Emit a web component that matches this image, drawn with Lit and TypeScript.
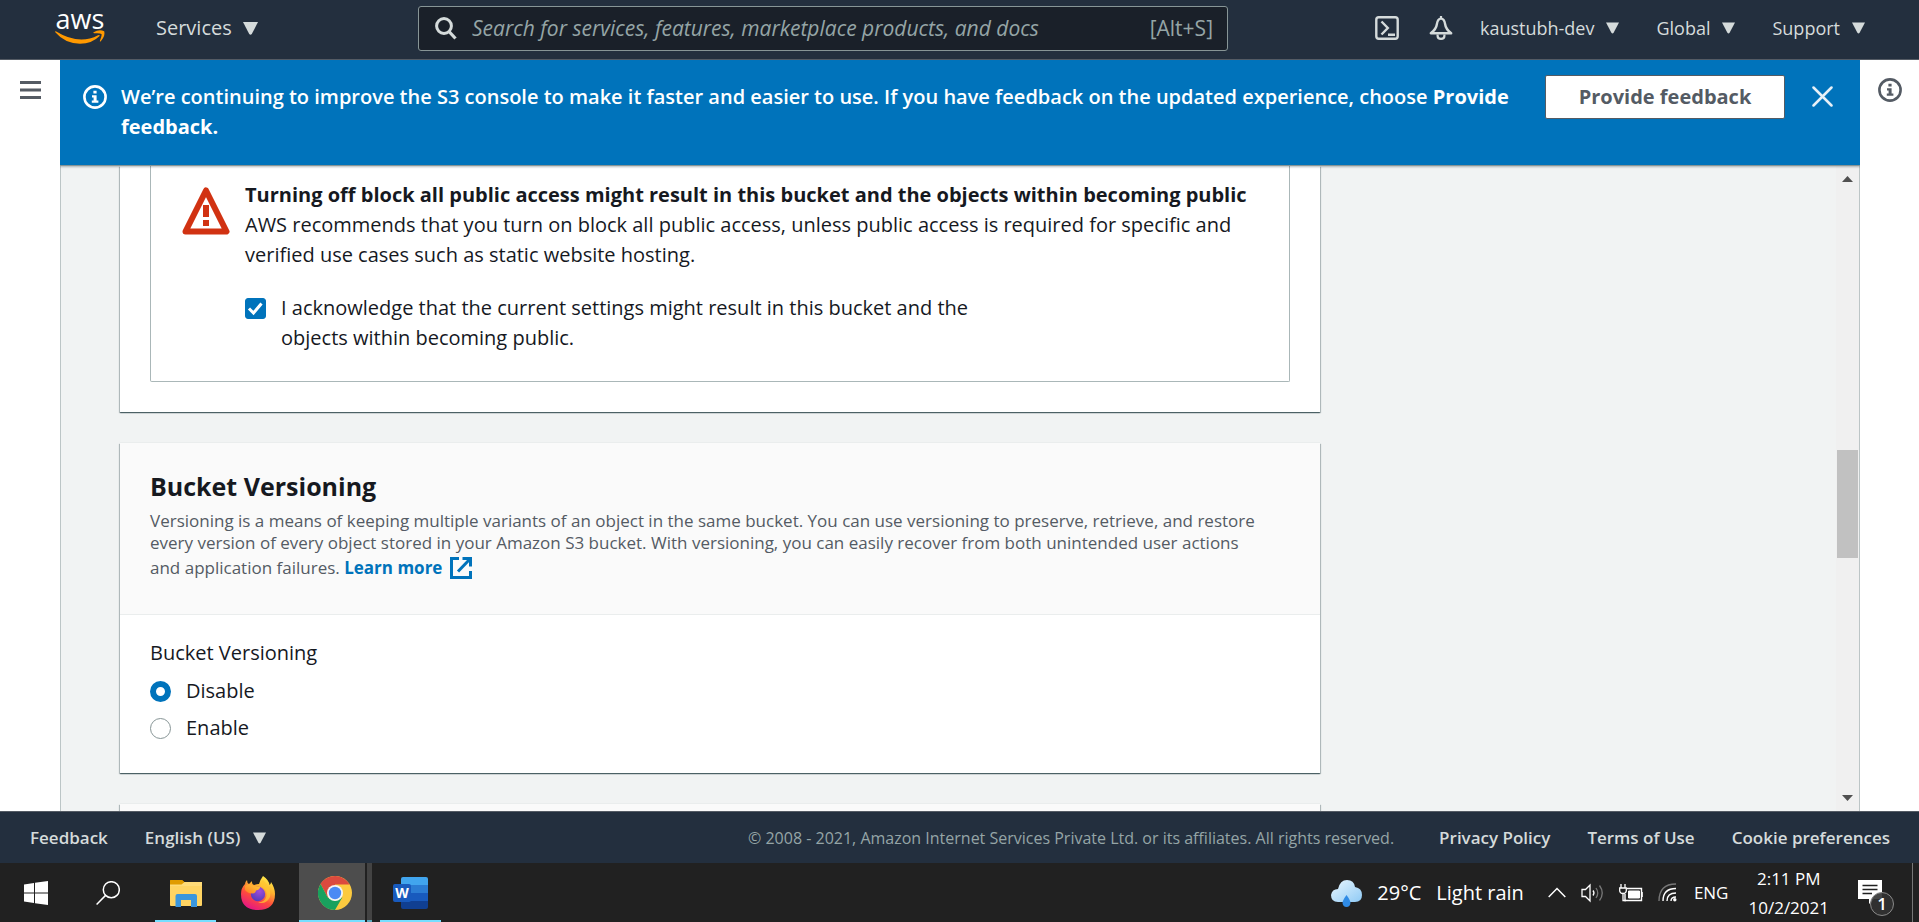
import { LitElement, html, css, svg } from "lit";
import { customElement, state } from "lit/decorators.js";

const caret = html`<svg class="caret" viewBox="0 0 14 12" aria-hidden="true"><path d="M0 0H14L8.2 11.2Q7 12.6 5.8 11.2Z" fill="currentColor"/></svg>`;

const infoIcon = html`<svg class="info" viewBox="0 0 24 24" aria-hidden="true">
  <circle cx="12" cy="12" r="10.6" fill="none" stroke="currentColor" stroke-width="2.6"/>
  <path d="M10.4 5.8h3.2v2.8h-3.2zM9 10.2h4.6v5.4h1.8v2.2H8.8v-2.2h1.8v-3.2H9z" fill="currentColor"/>
</svg>`;

@customElement("console-header")
class ConsoleHeader extends LitElement {
  static styles = css`
    :host { display: block; }
    .bar {
      display: grid;
      grid-template-columns: 418px minmax(200px, 810px) 1fr;
      align-items: center;
      height: 60px;
      box-sizing: border-box;
      padding-bottom: 3px;
      border-bottom: 1px solid #545b64;
      background: #232f3e;
      color: #d5dbdb;
    }
    .left { display: flex; align-items: center; padding-left: 55px; gap: 51px; }
    .logo { display: flex; flex-direction: column; align-items: center; gap: 4px; width: 50px; color: #fff; text-decoration: none; }
    .logo-word { font-size: 27px; line-height: 14px; }
    .smile { width: 50px; height: 14px; display: block; }
    button { all: unset; display: flex; align-items: center; gap: 12px; font-size: 18px; line-height: 24px; white-space: nowrap; cursor: pointer; }
    .services { font-size: 20px; gap: 11px; }
    .caret { width: 13px; height: 12px; flex: none; }
    .services .caret { width: 15px; height: 13px; }
    .search {
      display: flex;
      align-items: center;
      gap: 15px;
      height: 45px;
      box-sizing: border-box;
      padding: 0 14px 0 16px;
      border: 1px solid #879596;
      border-radius: 3px;
      background: #1a2029;
      color: #95a5a6;
      font-size: 21px;
      line-height: 30px;
    }
    .search input { all: unset; flex: 1; min-width: 0; font-size: 21px; }
    .search input::placeholder { color: #95a5a6; font-style: italic; opacity: 1; }
    .glass { width: 22px; height: 26px; color: #d5dbdb; }
    .right { display: flex; justify-content: flex-end; align-items: center; padding-right: 54px; gap: 37px; }
    .tools { display: flex; gap: 30px; }
    .account { display: flex; align-items: center; gap: 27px; }
    .tool { width: 24px; height: 24px; display: block; }
  `;

  render() {
    return html`<header class="bar">
      <div class="left">
        <a class="logo" href="#" aria-label="aws home">
          <span class="logo-word">aws</span>
          <svg class="smile" viewBox="0 0 50 14" aria-hidden="true">
            <path d="M0.8 1.2Q24 15.500 43 5.200Q45 4.300 44.600 5.900Q37 13.600 25 13.700Q10 13.700 0.300 2.300Q-0.200 1 0.800 1.200Z" fill="#ff9900"/>
            <path d="M38.600 2.300Q44 -1 49.200 1.200Q50.500 6 45.600 11.400Q44.500 12 45 10.600Q47.300 5 46.400 3.900Q45.200 2.900 39.100 3.300Q37.900 3.100 38.600 2.300Z" fill="#ff9900"/>
          </svg>
        </a>
        <button class="services" aria-haspopup="true">Services ${caret}</button>
      </div>
      <label class="search">
        <svg class="glass" viewBox="0 0 22 26" aria-hidden="true"><circle cx="9" cy="11" r="7.400" fill="none" stroke="currentColor" stroke-width="3"/><path d="M14 16.500L20.500 23.500" stroke="currentColor" stroke-width="3.200"/></svg>
        <input type="search" aria-label="Search" placeholder="Search for services, features, marketplace products, and docs">
        <span>[Alt+S]</span>
      </label>
      <div class="right">
        <div class="account">
          <div class="tools">
            <button aria-label="CloudShell"><svg class="tool" viewBox="0 0 24 24"><rect x="1.300" y="1.300" width="21.400" height="21.400" rx="2.500" fill="none" stroke="currentColor" stroke-width="2.400"/><path d="M6.500 5.500L12.800 12L6.500 18.500M13 18.700H20" fill="none" stroke="currentColor" stroke-width="2.400"/></svg></button>
            <button aria-label="Notifications"><svg class="tool" viewBox="0 0 24 24"><path d="M12 2.600C9 2.600 8.200 5.500 7.800 8.500C7.400 12 5 14.800 1.800 17.300H22.200C19 14.800 16.600 12 16.200 8.500C15.800 5.500 15 2.600 12 2.600Z" fill="none" stroke="currentColor" stroke-width="2.400" stroke-linejoin="round"/><path d="M12 0V3M8.600 18.500V20Q8.600 22.800 12 22.800Q15.400 22.800 15.400 20V18.500" fill="none" stroke="currentColor" stroke-width="2.200"/></svg></button>
          </div>
          <button aria-haspopup="true">kaustubh-dev ${caret}</button>
        </div>
        <button aria-haspopup="true">Global ${caret}</button>
        <button aria-haspopup="true">Support ${caret}</button>
      </div>
    </header>`;
  }
}

@customElement("feedback-banner")
class FeedbackBanner extends LitElement {
  static styles = css`
    :host { display: block; }
    .banner {
      display: flex;
      align-items: flex-start;
      height: 106px;
      box-sizing: border-box;
      padding: 15px 27px 0 23px;
      border-bottom: 1px solid #879596;
      background: #0073bb;
      color: #fff;
      box-shadow: 0 1px 2px rgba(0, 28, 36, 0.3);
    }
    .info { width: 24px; height: 24px; margin: 10px 14px 0 0; flex: none; }
    .message { flex: 1; margin: 7px 20px 0 0; font-size: 20px; line-height: 30px; font-weight: 600; }
    .message b { font-weight: 700; }
    button { font: inherit; cursor: pointer; }
    .action { width: 240px; height: 44px; flex: none; border: 1px solid #545b64; border-radius: 2px; background: #fff; color: #545b64; font-size: 20px; font-weight: 700; padding: 0 0 2px; }
    .close { display: flex; border: 0; background: none; color: #e6f0f7; padding: 11px 0 0; margin-left: 27px; }
    .close svg { width: 21px; height: 21px; display: block; }
  `;

  render() {
    return html`<div class="banner" role="status">
      ${infoIcon}
      <p class="message">We’re continuing to improve the S3 console to make it faster and easier to use. If you have feedback on the updated experience, choose <b>Provide feedback.</b></p>
      <button class="action">Provide feedback</button>
      <button class="close" aria-label="Dismiss"><svg viewBox="0 0 21 21"><path d="M1.500 1.500L19.500 19.500M19.500 1.500L1.500 19.500" stroke="currentColor" stroke-width="2.500" stroke-linecap="round"/></svg></button>
    </div>`;
  }
}

@customElement("bucket-form")
class BucketForm extends LitElement {
  @state() private versioning = "Disable";

  static styles = css`
    :host { display: block; }
    .page { display: flex; flex-direction: column; gap: 31px; max-width: 1200px; margin-left: 59px; color: #16191f; font-size: 20px; line-height: 30px; }
    .card { background: #fff; box-shadow: 0 1px 1px rgba(0, 28, 36, 0.5), 1px 1px 1px rgba(0, 28, 36, 0.2), -1px 1px 1px rgba(0, 28, 36, 0.2), 0 -1px 0 #eaeded; }
    .inset { padding: 0 30px 30px; }
    .alert { display: flex; gap: 15px; padding: 14px 31px 28px; border: 1px solid #aab7b8; border-top: 0; border-radius: 0 0 2px 2px; }
    .warning { width: 48px; height: 48px; margin-top: 7px; flex: none; }
    .alert p { margin: 0; }
    .ack { display: flex; align-items: flex-start; gap: 15px; max-width: 760px; margin-top: 23px; }
    .ack input { appearance: none; flex: none; box-sizing: border-box; width: 21px; height: 21px; margin: 5px 0 0; border: 1px solid #aab7b8; border-radius: 3px; background: #fff; }
    .ack input:checked {
      border-color: #0073bb;
      background: #0073bb url("data:image/svg+xml,%3Csvg xmlns='http://www.w3.org/2000/svg' viewBox='0 0 19 19'%3E%3Cpath d='M3 9.500L7.500 14L15.500 4.500' fill='none' stroke='white' stroke-width='3'/%3E%3C/svg%3E") center / 19px 19px no-repeat;
    }
    .head { padding: 26px 30px 32px; background: #fafafa; border-bottom: 1px solid #eaeded; }
    .next { height: 60px; background: #fafafa; }
    h2 { margin: 0; font-size: 25px; line-height: 34px; font-weight: 700; }
    .desc { margin: 7px 24px 0 0; color: #545b64; font-size: 17px; line-height: 22px; }
    .desc a { color: #0073bb; font-weight: 700; line-height: 28px; text-decoration: none; white-space: nowrap; }
    .external { width: 22px; height: 22px; margin-left: 8px; vertical-align: -5px; }
    fieldset { border: 0; margin: 0; padding: 23px 30px 30px; }
    legend { float: left; width: 100%; padding: 0; margin-bottom: 8px; }
    .options { clear: both; display: flex; flex-direction: column; gap: 7px; }
    .option { display: flex; align-items: center; gap: 15px; }
    .option input { appearance: none; width: 21px; height: 21px; margin: 0; box-sizing: border-box; border: 1px solid #879596; border-radius: 50%; background: #fff; }
    .option input:checked { border: 6px solid #0073bb; }
  `;

  render() {
    return html`<main class="page">
      <section class="card inset">
        <div class="alert">
          <svg class="warning" viewBox="0 0 48 48" aria-hidden="true"><path d="M24 3.500L44.500 44.500H3.500Z" fill="none" stroke="#d13212" stroke-width="6" stroke-linejoin="round"/><path d="M21 18h6v12h-6zM21 33h6v6h-6z" fill="#d13212"/></svg>
          <div>
            <p><strong>Turning off block all public access might result in this bucket and the objects within becoming public</strong></p>
            <p>AWS recommends that you turn on block all public access, unless public access is required for specific and verified use cases such as static website hosting.</p>
            <label class="ack"><input type="checkbox" checked><span>I acknowledge that the current settings might result in this bucket and the objects within becoming public.</span></label>
          </div>
        </div>
      </section>
      <section class="card">
        <div class="head">
          <h2>Bucket Versioning</h2>
          <p class="desc">Versioning is a means of keeping multiple variants of an object in the same bucket. You can use versioning to preserve, retrieve, and restore every version of every object stored in your Amazon S3 bucket. With versioning, you can easily recover from both unintended user actions and application failures. <a href="#">Learn more<svg class="external" viewBox="0 0 22 22" aria-hidden="true"><path d="M9 1.500H1.500V20.500H20.500V14M12.500 1.500H20.500V9.500M20 2L8 14.500" fill="none" stroke="currentColor" stroke-width="3"/></svg></a></p>
        </div>
        <fieldset>
          <legend>Bucket Versioning</legend>
          <div class="options">
            ${["Disable", "Enable"].map((name) => html`<label class="option"><input type="radio" name="versioning" .checked=${this.versioning === name} @change=${() => (this.versioning = name)}><span>${name}</span></label>`)}
          </div>
        </fieldset>
      </section>
      <section class="card next"></section>
    </main>`;
  }
}

@customElement("console-footer")
class ConsoleFooter extends LitElement {
  static styles = css`
    :host { display: block; }
    footer { display: flex; align-items: center; justify-content: space-between; height: 52px; box-sizing: border-box; padding: 0 29px 0 30px; border-top: 1px solid #545b64; background: #232f3e; color: #d5dbdb; font-size: 17px; font-weight: 600; white-space: nowrap; }
    div { display: flex; align-items: center; gap: 37px; }
    a { color: inherit; text-decoration: none; }
    .language { display: flex; align-items: center; gap: 12px; }
    select { all: unset; font-size: 17px; cursor: pointer; }
    .caret { width: 13px; height: 12px; }
    .copyright { color: #95a5a6; margin-right: 8px; font-size: 16px; font-weight: 400; }
  `;

  render() {
    return html`<footer>
      <div>
        <a href="#">Feedback</a>
        <label class="language"><select aria-label="Language"><option>English (US)</option></select>${caret}</label>
      </div>
      <div>
        <span class="copyright">© 2008 - 2021, Amazon Internet Services Private Ltd. or its affiliates. All rights reserved.</span>
        <a href="#">Privacy Policy</a>
        <a href="#">Terms of Use</a>
        <a href="#">Cookie preferences</a>
      </div>
    </footer>`;
  }
}

const folderArt = svg`
  <path d="M1 3Q1 2 2 2H13L16 5V10H1Z" fill="#e09b00"/>
  <path d="M1 6H33V27Q33 28 32 28H2Q1 28 1 27Z" fill="#ffd463"/>
  <path d="M1 6H12L15 4H33V8H1Z" fill="#ffdb78"/>
  <path d="M1 3Q1 2 2 2H13L15.500 4L12.500 6.500H1Z" fill="#e09b00"/>
  <path d="M6.500 29V18Q6.500 16 8.500 16H26Q28 16 28 18V29H22V22H12V29Z" fill="#3a96dd"/>`;

const firefoxArt = svg`
  <defs>
    <linearGradient id="ff1" x1="0.800" y1="0" x2="0.300" y2="1"><stop offset="0" stop-color="#fff44f"/><stop offset=".35" stop-color="#ffb22e"/><stop offset=".65" stop-color="#ff4a3d"/><stop offset="1" stop-color="#e31587"/></linearGradient>
    <radialGradient id="ff2" cx=".6" cy=".3" r=".8"><stop offset="0" stop-color="#a44bd8"/><stop offset="1" stop-color="#4a3bb8"/></radialGradient>
    <linearGradient id="ff3" x1="1" y1="0" x2="0" y2="1"><stop offset="0" stop-color="#ffd23c"/><stop offset="1" stop-color="#ff7a22"/></linearGradient>
  </defs>
  <path d="M22 0Q28 4 28.500 9Q30 8 30 6Q34 12 34 18Q34 34 17 34Q0 34 0 18Q0 12 4 8Q4 6 6 4Q6 7 8 8Q9 7 11 5Q10.500 8 13 9Q16 8 18 8Q19 4 22 0Z" fill="url(#ff1)"/>
  <circle cx="17" cy="18" r="7.200" fill="url(#ff2)"/>
  <path d="M4 10Q8 7 12 9.500Q14 11 19 11Q19 13.500 15 14.500Q15 17 11.500 17.500Q7 17.500 4 14Z" fill="url(#ff3)"/>
  <path d="M20 10Q26 13 25.500 20Q24 26 17 26.500Q25 29 29 21Q31 12 22 4Q18 7 20 10Z" fill="#ffc532" opacity=".75"/>`;

const chromeArt = svg`
  <circle cx="17" cy="17" r="17" fill="#fcca3f"/>
  <path d="M17 17L17 8.500H31.700A17 17 0 0 0 2.600 8L9.600 21.200Z" fill="#db4a3e"/>
  <path d="M2.600 8A17 17 0 0 0 17 34L24.400 21.200L17 25L9.600 21.200Z" fill="#19a15e"/>
  <circle cx="17" cy="17" r="8" fill="#f4f4f4"/>
  <circle cx="17" cy="17" r="6.200" fill="#4a8af4"/>`;

const wordArt = svg`
  <path d="M8 2Q8 0 10 0H33Q35 0 35 2V8H8Z" fill="#41a5ee"/>
  <path d="M8 8H35V16H8Z" fill="#2b7cd3"/>
  <path d="M8 16H35V24H8Z" fill="#185abd"/>
  <path d="M8 24H35V30Q35 32 33 32H10Q8 32 8 30Z" fill="#103f91"/>
  <rect x="0" y="7" width="18" height="18" rx="2" fill="#185abd"/>
  <text x="9" y="21" text-anchor="middle" font-size="14" font-weight="700" fill="#fff">W</text>`;

@customElement("task-bar")
class TaskBar extends LitElement {
  static styles = css`
    :host { display: block; }
    .bar { display: flex; justify-content: space-between; height: 59px; background: #212121; color: #fff; white-space: nowrap; }
    .apps { display: flex; align-items: stretch; }
    button { all: unset; box-sizing: border-box; display: flex; align-items: center; justify-content: center; }
    svg { display: block; flex: none; }
    .start, .find { width: 72px; }
    .app { width: 61px; margin-left: 11px; border-bottom: 2px solid transparent; border-top: 2px solid transparent; }
    .running { border-bottom-color: #76deff; }
    .stack { display: flex; margin-left: 11px; }
    .active { width: 66px; margin: 0; background: #4d4d4d; border-top: 0; padding: 2px 0 0 6px; border-bottom-color: #76deff; }
    .behind { width: 5px; margin-left: 2px; background: #434343; border-bottom: 2px solid #5fa9be; }
    .after { margin-left: 8px; }
    .tray { display: flex; align-items: center; }
    .weather { gap: 15px; font-size: 20px; }
    .status { display: flex; align-items: center; gap: 15px; margin-left: 24px; }
    .lang { margin-left: 17px; font-size: 17px; }
    .clock { display: flex; flex-direction: column; align-items: center; gap: 6px; margin: 0 29px 0 20px; font-size: 17px; line-height: 23px; }
    .note { position: relative; width: 36px; height: 36px; margin: 10px 18px 0 0; }
    .badge { position: absolute; right: 0; bottom: 0; width: 24px; height: 24px; box-sizing: border-box; border: 1px solid #8a8a8a; border-radius: 50%; background: rgba(50, 50, 50, 0.900); font-size: 17px; line-height: 22px; font-weight: 600; text-align: center; }
    .peek { align-self: stretch; width: 6px; border-left: 1px solid #777; }
  `;

  render() {
    return html`<nav class="bar" aria-label="Taskbar">
      <div class="apps">
        <button class="start" aria-label="Start"><svg width="24" height="24" viewBox="0 0 24 24"><path d="M0 3.500L10 2V11.500H0ZM11 1.800L24 0V11.500H11ZM0 12.500H10V22L0 20.500ZM11 12.500H24V24L11 22.200Z" fill="#fff"/></svg></button>
        <button class="find" aria-label="Search"><svg width="24" height="24" viewBox="0 0 24 24"><circle cx="15.300" cy="8.700" r="8" fill="none" stroke="#fff" stroke-width="1.500"/><path d="M9.600 14.400L0.600 23.500" stroke="#fff" stroke-width="1.500"/></svg></button>
        <button class="app running" aria-label="File Explorer"><svg width="34" height="30" viewBox="0 0 34 30">${folderArt}</svg></button>
        <button class="app" aria-label="Firefox"><svg width="34" height="34" viewBox="0 0 34 34">${firefoxArt}</svg></button>
        <div class="stack">
          <button class="app active" aria-label="Chrome"><svg width="34" height="34" viewBox="0 0 34 34">${chromeArt}</svg></button>
          <span class="behind"></span>
        </div>
        <button class="app running after" aria-label="Word"><svg width="35" height="32" viewBox="0 0 35 32">${wordArt}</svg></button>
      </div>
      <div class="tray">
        <button class="weather"><svg width="31" height="28" viewBox="0 0 31 28"><defs><linearGradient id="cloud" x1="0" y1="0" x2="1" y2="1"><stop offset="0" stop-color="#eaf7ff"/><stop offset="1" stop-color="#8fcaf5"/></linearGradient></defs><path d="M7 23Q0 23 0 16Q1 10 7 10Q9 1 16 1Q23 1 24 8Q31 9 31 16Q31 23 24 23Z" fill="url(#cloud)"/><path d="M15.500 16Q19.500 21.500 19.500 24Q19 28 15.500 28Q12 28 11.500 24Q11.500 21.500 15.500 16Z" fill="#2f8be6"/></svg><span>29°C</span><span>Light rain</span></button>
        <div class="status">
          <svg width="18" height="11" viewBox="0 0 18 11"><path d="M0.700 10L9 1.500L17.300 10" fill="none" stroke="#fff" stroke-width="1.500"/></svg>
          <svg width="23" height="20" viewBox="0 0 23 20"><path d="M1 6.500H4.500L9 2V18L4.500 13.500H1Z" fill="none" stroke="#fff" stroke-width="1.300"/><path d="M12 7.500Q14 10 12 12.500" fill="none" stroke="#fff" stroke-width="1.300"/><path d="M15 5Q18.500 10 15 15M18.500 2.500Q24 10 18.500 17.500" fill="none" stroke="#777" stroke-width="1.300"/></svg>
          <svg width="24" height="18" viewBox="0 0 24 18"><path d="M6 10V16.500H22.500V4.500H8" fill="none" stroke="#fff" stroke-width="1.400"/><path d="M23.300 8v5M9.500 7H20.500V14H9.500Z" fill="#fff" stroke="#fff"/><path d="M2 0V4M6 0V4M0.700 4H7.300V7Q7 9.500 4 9.500Q1 9.500 0.700 7ZM4 9.500V16.500H7" fill="none" stroke="#fff" stroke-width="1.300"/></svg>
          <svg width="19" height="19" viewBox="0 0 19 19"><path d="M1 18Q1 1 18 1" fill="none" stroke="#777" stroke-width="1.400"/><path d="M5 18Q5 5.500 18 5.500M9 18Q9 10 18 10M13 18Q13 14 18 14" fill="none" stroke="#fff" stroke-width="1.400"/><circle cx="16.800" cy="16.800" r="1.700" fill="#fff"/></svg>
        </div>
        <span class="lang">ENG</span>
        <div class="clock"><span>2:11 PM</span><span>10/2/2021</span></div>
        <button class="note" aria-label="Notifications"><svg width="36" height="36" viewBox="0 0 36 36"><path d="M0 0H24V19H16L11 24V19H0Z" fill="#fff"/><path d="M4.500 5.500H19.500M4.500 9.500H19.500M4.500 13.500H14" stroke="#212121" stroke-width="1.300"/></svg><span class="badge">1</span></button>
        <span class="peek"></span>
      </div>
    </nav>`;
  }
}

@customElement("app-root")
class AppRoot extends LitElement {
  static styles = css`
    :host { display: flex; flex-direction: column; height: 100vh; overflow: hidden; font-family: "Open Sans", "Noto Sans", sans-serif; }
    .middle { flex: 1; min-height: 0; display: grid; grid-template-columns: 60px minmax(0, 1fr) 59px; background: #fff; color: #545b64; }
    .rail { all: unset; display: flex; justify-content: center; align-self: start; cursor: pointer; }
    .menu { width: 21px; height: 18px; padding-top: 21px; }
    .info { width: 24px; height: 24px; padding-top: 18px; }
    .center { display: flex; flex-direction: column; min-height: 0; overflow: hidden; background: #f1f3f3; }
    .banner { position: relative; }
    .scroller { flex: 1; min-height: 0; display: flex; border: 1px solid #bcc5c6; border-width: 0 1px; }
    .content { flex: 1; min-width: 0; overflow: hidden; }
    .track { display: flex; flex-direction: column; align-items: center; width: 23px; box-sizing: border-box; padding: 10px 1px 10px 0; background: #f0f0f0; }
    .arrow { width: 11px; height: 6px; flex: none; }
    .above { flex: 268; }
    .thumb { flex: 108; align-self: stretch; margin-left: 1px; background: #c1c1c1; }
    .below { flex: 237; }
  `;

  render() {
    return html`
      <console-header></console-header>
      <div class="middle">
        <button class="rail" aria-label="Open navigation"><svg class="menu" viewBox="0 0 21 18"><path d="M0 1.500H21M0 9H21M0 16.500H21" stroke="#545b64" stroke-width="3"/></svg></button>
        <div class="center">
          <feedback-banner class="banner"></feedback-banner>
          <div class="scroller">
            <bucket-form class="content"></bucket-form>
            <div class="track" aria-hidden="true">
              <svg class="arrow" viewBox="0 0 11 6"><path d="M0 6L5.500 0L11 6Z" fill="#505050"/></svg>
              <span class="above"></span><span class="thumb"></span><span class="below"></span>
              <svg class="arrow" viewBox="0 0 11 6"><path d="M0 0L5.500 6L11 0Z" fill="#505050"/></svg>
            </div>
          </div>
        </div>
        <button class="rail" aria-label="Open help panel">${infoIcon}</button>
      </div>
      <console-footer></console-footer>
      <task-bar></task-bar>
    `;
  }
}
